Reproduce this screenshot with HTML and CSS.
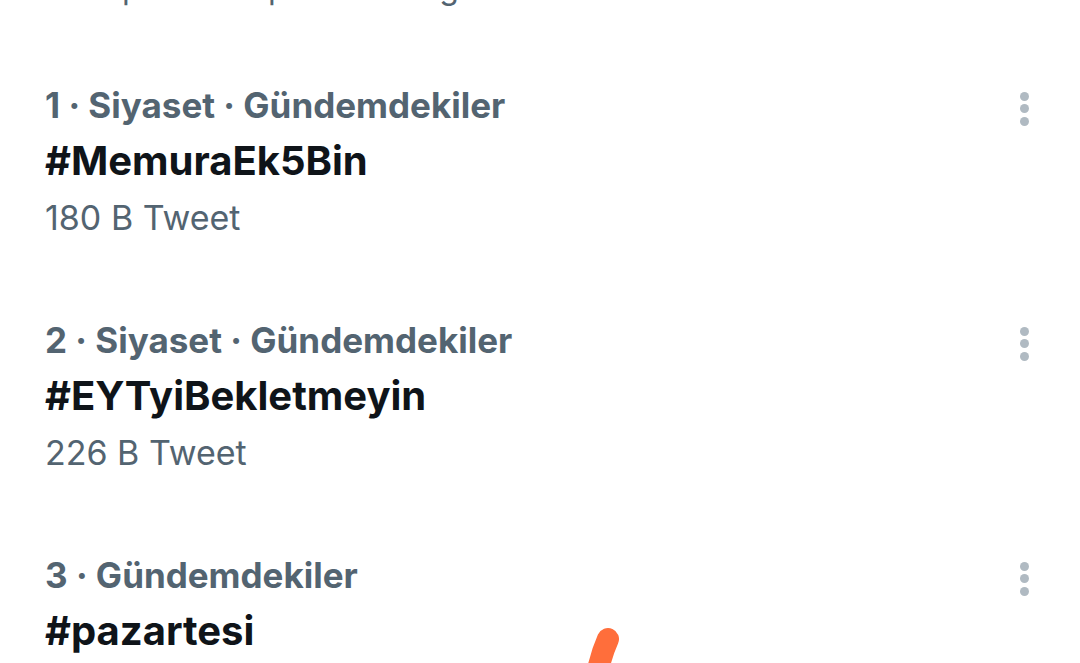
FILE: index.html
```html
<!DOCTYPE html>
<html lang="tr">
<head>
<meta charset="utf-8">
<link rel="stylesheet" href="styles.css">
</head>
<body>
<div class="page">
  <div class="intro">Türk pazarı ile pek fazlası gündem</div>
  <ul class="trends">
    <li class="trend">
      <div class="trend-body">
        <div class="meta">1 · Siyaset · Gündemdekiler</div>
        <div class="title">#MemuraEk5Bin</div>
        <div class="count">180 B Tweet</div>
      </div>
      <div class="more"><span></span><span></span><span></span></div>
    </li>
    <li class="trend">
      <div class="trend-body">
        <div class="meta">2 · Siyaset · Gündemdekiler</div>
        <div class="title">#EYTyiBekletmeyin</div>
        <div class="count">226 B Tweet</div>
      </div>
      <div class="more"><span></span><span></span><span></span></div>
    </li>
    <li class="trend trend-last">
      <div class="trend-body">
        <div class="meta">3 · Gündemdekiler</div>
        <div class="title">#pazartesi</div>
      </div>
      <div class="more"><span></span><span></span><span></span></div>
    </li>
  </ul>
</div>
<svg class="scribble" width="80" height="60" viewBox="0 0 80 60">
  <path d="M42 17 C38 26 35 34 32 48" fill="none" stroke="#ff6e3b" stroke-width="22" stroke-linecap="round"/>
</svg>
</body>
</html>
```

FILE: styles.css
```css
html, body {
  margin: 0;
  padding: 0;
  background: #ffffff;
  overflow: hidden;
}
body {
  width: 1080px;
  height: 663px;
  position: relative;
  font-family: Inter, "Noto Sans", sans-serif;
}
.page {
  padding: 0 0 0 45px;
  height: 663px;
  overflow: hidden;
}
.intro {
  font-size: 32px;
  line-height: 40px;
  color: #536471;
  margin-top: -32px;
  margin-bottom: 29px;
  white-space: nowrap;
}
.trends {
  list-style: none;
  margin: 0;
  padding: 0;
}
.trend {
  display: flex;
  justify-content: space-between;
  align-items: flex-start;
  padding: 40px 0 25px 0;
}
.trend-last {
  padding-bottom: 0;
}
.meta {
  font-size: 35px;
  font-weight: 700;
  color: #536471;
  line-height: 56px;
}
.title {
  font-size: 40px;
  font-weight: 700;
  color: #0f1419;
  line-height: 56px;
}
.count {
  font-size: 34px;
  color: #536471;
  line-height: 58px;
}
.more {
  display: flex;
  flex-direction: column;
  gap: 3.5px;
  margin: 14.5px 51px 0 0;
}
.more span {
  width: 9px;
  height: 9px;
  border-radius: 50%;
  background: #b0bac2;
}
.scribble {
  position: absolute;
  left: 566px;
  top: 622px;
}
```
